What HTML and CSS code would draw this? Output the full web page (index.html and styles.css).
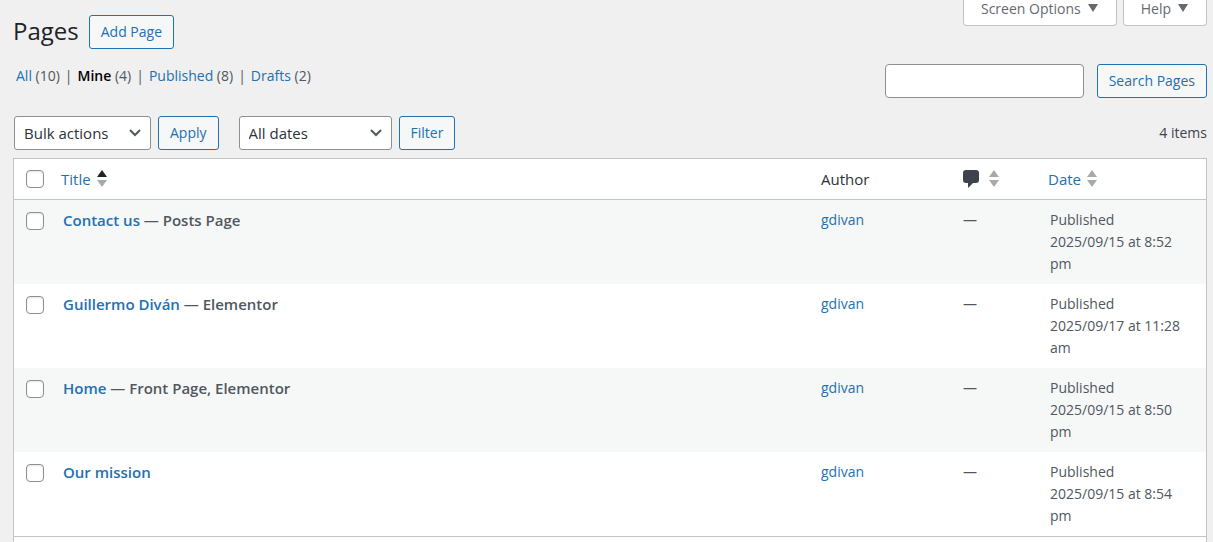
FILE: index.html
```html
<!DOCTYPE html>
<html lang="en">
<head>
<meta charset="utf-8">
<title>Pages</title>
<link rel="stylesheet" href="styles.css">
</head>
<body>
<main class="wrap">
  <header class="top">
    <h1 class="heading">Pages</h1>
    <a class="button" href="#add">Add Page</a>
    <div class="screen-meta">
      <button class="meta-tab" type="button">Screen Options <svg class="tri" viewBox="0 0 10 8" aria-hidden="true"><path d="M0 0h10L5 8z"/></svg></button>
      <button class="meta-tab" type="button">Help <svg class="tri" viewBox="0 0 10 8" aria-hidden="true"><path d="M0 0h10L5 8z"/></svg></button>
    </div>
  </header>

  <div class="subhead">
    <ul class="views">
      <li><a href="#all">All</a> (10)</li>
      <li><a class="current" href="#mine">Mine</a> (4)</li>
      <li><a href="#published">Published</a> (8)</li>
      <li><a href="#drafts">Drafts</a> (2)</li>
    </ul>
    <form class="search">
      <input class="search-input" type="search" aria-label="Search Pages">
      <button class="button" type="button">Search Pages</button>
    </form>
  </div>

  <div class="tablenav">
    <select class="select bulk" aria-label="Select bulk action"><option>Bulk actions</option></select>
    <button class="button" type="button">Apply</button>
    <select class="select dates" aria-label="Filter by date"><option>All dates</option></select>
    <button class="button" type="button">Filter</button>
    <span class="count">4 items</span>
  </div>

  <div class="panel">
    <table class="list">
      <colgroup><col class="c-check"><col><col class="c-author"><col class="c-comments"><col class="c-date"></colgroup>
      <thead>
        <tr>
          <th class="check"><input class="box" type="checkbox" aria-label="Select all"></th>
          <th class="sortable"><a class="sort" href="#title">Title <svg class="arrows" viewBox="0 0 10 18" aria-hidden="true"><path class="on" d="M5 0l5 7H0z"/><path d="M0 10h10l-5 7z"/></svg></a></th>
          <th>Author</th>
          <th><a class="sort" href="#comments" aria-label="Comments"><svg class="bubble" viewBox="0 0 16 18" aria-hidden="true"><path d="M3 0h10q3 0 3 3v7q0 3-3 3h-3l-5 5v-5H3q-3 0-3-3V3q0-3 3-3z"/></svg><svg class="arrows" viewBox="0 0 10 18" aria-hidden="true"><path d="M5 0l5 7H0z"/><path d="M0 10h10l-5 7z"/></svg></a></th>
          <th class="sortable"><a class="sort" href="#date">Date <svg class="arrows" viewBox="0 0 10 18" aria-hidden="true"><path d="M5 0l5 7H0z"/><path d="M0 10h10l-5 7z"/></svg></a></th>
        </tr>
      </thead>
      <tbody>
        <tr>
          <td class="check"><input class="box" type="checkbox" aria-label="Select Contact us"></td>
          <td class="title"><a href="#p1">Contact us</a> — Posts Page</td>
          <td><a href="#author">gdivan</a></td>
          <td>—</td>
          <td>Published<br>2025/09/15 at 8:52 pm</td>
        </tr>
        <tr>
          <td class="check"><input class="box" type="checkbox" aria-label="Select Guillermo Diván"></td>
          <td class="title"><a href="#p2">Guillermo Diván</a> — Elementor</td>
          <td><a href="#author">gdivan</a></td>
          <td>—</td>
          <td>Published<br>2025/09/17 at 11:28 am</td>
        </tr>
        <tr>
          <td class="check"><input class="box" type="checkbox" aria-label="Select Home"></td>
          <td class="title"><a href="#p3">Home</a> — Front Page, Elementor</td>
          <td><a href="#author">gdivan</a></td>
          <td>—</td>
          <td>Published<br>2025/09/15 at 8:50 pm</td>
        </tr>
        <tr>
          <td class="check"><input class="box" type="checkbox" aria-label="Select Our mission"></td>
          <td class="title"><a href="#p4">Our mission</a></td>
          <td><a href="#author">gdivan</a></td>
          <td>—</td>
          <td>Published<br>2025/09/15 at 8:54 pm</td>
        </tr>
      </tbody>
    </table>
  </div>
</main>
</body>
</html>
```

FILE: styles.css
```css
* { box-sizing: border-box; }
body {
  margin: 0;
  background: #f0f0f0;
  color: #50575e;
  font: 14px/22px "Open Sans", "Noto Sans", sans-serif;
}
a { color: #2271b1; text-decoration: none; }
button, input, select { font: inherit; margin: 0; }
.wrap {
  display: flex;
  flex-direction: column;
  min-height: 100vh;
  padding: 0 6px 0 13px;
}
.top { display: flex; align-items: flex-start; gap: 10px; }
.heading {
  margin: 15px 0 0;
  color: #1d2327;
  font-size: 24px;
  font-weight: 400;
  line-height: 32px;
}
.top > .button { margin-top: 15px; }
.button {
  height: 34px;
  padding: 0 11px;
  border: 1px solid #2271b1;
  border-radius: 3px;
  background: #f6f7f7;
  color: #2271b1;
  line-height: 32px;
  white-space: nowrap;
}
.screen-meta { display: flex; gap: 6px; margin-left: auto; }
.meta-tab {
  display: flex;
  align-items: center;
  gap: 7px;
  height: 26px;
  padding: 0 18px 7px 17px;
  border: 1px solid #c3c4c7;
  border-top: 0;
  border-radius: 0 0 4px 4px;
  background: #fff;
  color: #646970;
}
.tri { width: 10px; height: 8px; margin-bottom: 2px; fill: #646970; }
.subhead {
  display: flex;
  justify-content: space-between;
  align-items: flex-start;
  margin-top: 15px;
}
.views {
  display: flex;
  margin: 0;
  padding: 1px 0 0 3px;
  list-style: none;
}
.views li + li::before { content: "|"; margin: 0 5px; }
.views .current { color: #000; font-weight: 600; }
.search { display: flex; gap: 13px; }
.search-input {
  width: 199px;
  height: 34px;
  padding: 0 8px;
  border: 1px solid #8c8f94;
  border-radius: 4px;
  background: #fff;
}
.tablenav {
  display: flex;
  align-items: center;
  gap: 7px;
  margin: 18px 0 8px;
  padding-left: 1px;
}
.select {
  height: 34px;
  padding: 0 24px 0 9px;
  border: 1px solid #8c8f94;
  border-radius: 3px;
  appearance: none;
  background: #fff url("data:image/svg+xml,%3Csvg xmlns='http://www.w3.org/2000/svg' width='14' height='10'%3E%3Cpath d='M2 2l5 5 5-5' fill='none' stroke='%2350575e' stroke-width='2'/%3E%3C/svg%3E") no-repeat right 8px center;
  color: #2c3338;
  font-size: 15px;
}
.bulk { width: 137px; }
.dates { width: 153px; margin-left: 13px; }
.count { margin-left: auto; color: #3c434a; }
.panel {
  flex: 1;
  border: 1px solid #c3c4c7;
  border-bottom: 0;
  background: #fff;
}
.list { width: 100%; border-collapse: separate; border-spacing: 0; table-layout: fixed; border-bottom: 1px solid #c3c4c7; }
.c-check { width: 39px; }
.c-author { width: 142px; }
.c-comments { width: 87px; }
.c-date { width: 166px; }
.list th {
  height: 41px;
  padding: 0 10px;
  border-bottom: 1px solid #c3c4c7;
  color: #2c3338;
  font-size: 15px;
  font-weight: 400;
  text-align: left;
}
.list th.sortable { padding-left: 8px; }
.list td { padding: 9px 16px 9px 10px; vertical-align: top; }
.list tbody tr:nth-child(odd) { background: #f6f7f7; }
.list .title { font-size: 15px; font-weight: 600; }
.list .check { padding-left: 12px; padding-right: 0; }
.list td.check { padding-top: 12px; }
.box {
  display: block;
  width: 18px;
  height: 18px;
  border: 1px solid #8c8f94;
  border-radius: 4px;
  appearance: none;
  background: #fff;
  box-shadow: inset 0 1px 2px rgba(0, 0, 0, .1);
}
.sort { display: flex; align-items: center; gap: 6px; }
.arrows { width: 10px; height: 18px; fill: #a7aaad; }
.arrows .on { fill: #1d2327; }
.bubble { width: 16px; height: 18px; margin-right: 4px; fill: #3c434a; }
```
